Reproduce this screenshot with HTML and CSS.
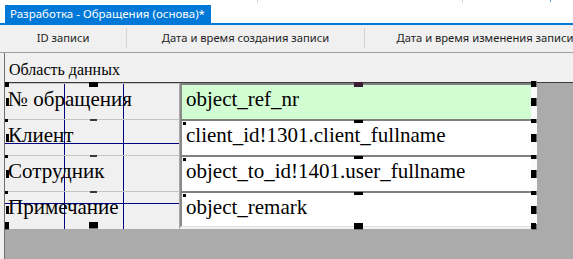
FILE: index.html
```html
<!DOCTYPE html>
<html lang="ru">
<head>
    <meta charset="UTF-8">
    <title>Разработка - Обращения (основа)</title>
    <link rel="stylesheet" href="styles.css">
</head>
<body>
    <div class="tabbar">
        <div class="tab">Разработка - Обращения (основа)*</div>
    </div>

    <div class="colheads">
        <div class="colhead c1">ID записи</div>
        <div class="colhead c2">Дата и время создания записи</div>
        <div class="colhead c3">Дата и время изменения записи</div>
    </div>

    <div class="main">
        <div class="ruler"></div>
        <div class="surface">
            <div class="section-head">Область данных</div>

            <div class="detail">
                <div class="form">
                    <div class="row first">
                        <div class="label">№ обращения</div>
                        <div class="field green">object_ref_nr</div>
                        <div class="edge"></div>
                        <span class="h h-lt big"></span>
                        <span class="h h-tm big"></span>
                        <span class="h h-lm"></span>
                        <span class="h f-tm big dark"></span>
                        <span class="h f-rt big"></span>
                        <span class="h f-rm"></span>
                    </div>
                    <div class="row">
                        <div class="label">Клиент</div>
                        <div class="field">client_id!1301.client_fullname</div>
                        <div class="edge"></div>
                        <span class="h h-lt"></span>
                        <span class="h h-tm"></span>
                        <span class="h h-lm"></span>
                        <span class="h f-lt"></span>
                        <span class="h f-tm"></span>
                        <span class="h f-rt"></span>
                        <span class="h f-rm"></span>
                    </div>
                    <div class="row">
                        <div class="label">Сотрудник</div>
                        <div class="field">object_to_id!1401.user_fullname</div>
                        <div class="edge"></div>
                        <span class="h h-lt"></span>
                        <span class="h h-tm"></span>
                        <span class="h h-lm"></span>
                        <span class="h f-lt"></span>
                        <span class="h f-tm"></span>
                        <span class="h f-rt"></span>
                        <span class="h f-rm"></span>
                    </div>
                    <div class="row last">
                        <div class="label">Примечание</div>
                        <div class="field">object_remark</div>
                        <div class="edge"></div>
                        <span class="h h-lt"></span>
                        <span class="h h-tm"></span>
                        <span class="h h-lm"></span>
                        <span class="h h-lb"></span>
                        <span class="h h-bm"></span>
                        <span class="h f-lt"></span>
                        <span class="h f-tm"></span>
                        <span class="h f-rt"></span>
                        <span class="h f-rm"></span>
                        <span class="h f-bm"></span>
                        <span class="h f-rb"></span>
                    </div>
                </div>
                <div class="rest"></div>
            </div>

            <div class="bottom"></div>
        </div>
    </div>
</body>
</html>
```

FILE: styles.css
```css
body {
    margin: 0;
    width: 573px;
    height: 259px;
    overflow: hidden;
    background: #f0f0f0;
    font-family: "Noto Sans", "Liberation Sans", sans-serif;
}

/* tab strip */
.tabbar {
    height: 23px;
    display: flex;
    align-items: flex-end;
    padding-left: 5px;
    background-color: #fff;
    background-image:
        linear-gradient(#d6d6d6, #d6d6d6),
        linear-gradient(#d6d6d6, #d6d6d6),
        linear-gradient(#5b9bd5, #5b9bd5);
    background-size: 1px 3px, 1px 3px, 1px 2px;
    background-position: 257px 0, 462px 0, 550px 0;
    background-repeat: no-repeat;
    border-bottom: 2px solid #0078d7;
}
.tab {
    height: 18px;
    line-height: 18px;
    padding: 0 6px 0 5px;
    background: #0078d7;
    color: #fff;
    font-size: 11.5px;
    white-space: nowrap;
}

/* column headers */
.colheads {
    display: flex;
    height: 27px;
    border-bottom: 1px solid #a0a0a0;
    white-space: nowrap;
    overflow: hidden;
}
.colhead {
    flex: none;
    height: 20px;
    margin-top: 3px;
    line-height: 20px;
    text-align: center;
    font-size: 11.2px;
    color: #1e1e1e;
    border-right: 1px solid #d4d4d4;
}
.c1 { width: 126px; }
.c2 { width: 237px; }
.c3 { width: 240px; border-right: none; }

/* design surface */
.main {
    display: flex;
    height: 206px;
}
.ruler {
    width: 4px;
    border-right: 1px solid #6e6e6e;
}
.surface {
    flex: 1;
    display: flex;
    flex-direction: column;
}
.section-head {
    height: 24px;
    padding: 5px 0 0 4px;
    font-family: "Liberation Serif", serif;
    font-size: 16px;
    line-height: 24px;
    color: #000;
}

.detail {
    display: flex;
    height: 146px;
    border-top: 1px solid #3c3c3c;
}
.form {
    width: 532px;
    display: flex;
    flex-direction: column;
    background-color: #f0f0f0;
    background-image:
        linear-gradient(#000080, #000080),
        linear-gradient(#000080, #000080),
        linear-gradient(#000080, #000080),
        linear-gradient(#000080, #000080);
    background-size: 1px 100%, 1px 100%, 100% 1px, 100% 1px;
    background-position: 59px 0, 118px 0, 0 60px, 0 120px;
    background-repeat: no-repeat;
}
.rest {
    flex: 1;
    background: #ababab;
}
.bottom {
    flex: 1;
    background: #ababab;
}

.row {
    position: relative;
    display: flex;
    height: 36px;
}
.row.last { height: 38px; }

.label {
    width: 171px;
    padding-left: 3px;
    border-top: 1px solid #c4c4c4;
    border-right: 1px solid #a8a8a8;
    font-family: "Liberation Serif", serif;
    font-size: 21px;
    line-height: 24px;
    padding-top: 3px;
    color: #000;
    white-space: nowrap;
}
.field {
    width: 345px;
    padding: 2px 0 0 4px;
    border-top: 2px solid #808080;
    border-left: 2px solid #8a8a8a;
    background: #fff;
    font-family: "Liberation Serif", serif;
    font-size: 21px;
    line-height: 24px;
    color: #000;
    white-space: nowrap;
    overflow: hidden;
}
.field.green { background: #d2fcd2; }
.row.last .field { border-bottom: 1px solid #e2e2e2; margin-bottom: 2px; }
.edge {
    flex: 1;
    background: #fafafa;
}

/* selection handles */
.h {
    position: absolute;
    background: #000;
}
.h-lt { left: 0; top: 0; width: 3px; height: 3px; }
.h-lt.big { top: -1px; width: 4px; height: 5px; }
.h-tm { left: 85px; top: 0; width: 7px; height: 2px; background: #3a3a3a; }
.h-tm.big { left: 84px; top: -1px; width: 9px; height: 5px; background: #000; }
.h-lm { left: 1px; top: 15px; width: 3px; height: 8px; }
.h-lb { left: 0; top: 31px; width: 4px; height: 7px; box-shadow: 0 1px #777; }
.h-bm { left: 84px; top: 31px; width: 9px; height: 6px; box-shadow: 0 1px #777; }
.f-lt { left: 178px; top: 3px; width: 3px; height: 3px; }
.f-tm { left: 349px; top: 1px; width: 9px; height: 3px; }
.f-tm.big { top: -1px; height: 5px; }
.f-tm.dark { background: #3b1a33; }
.f-rt { left: 526px; top: 0; width: 5px; height: 4px; box-shadow: 1px 0 #777; }
.f-rt.big { top: -2px; height: 6px; }
.f-rm { left: 526px; top: 15px; width: 5px; height: 8px; box-shadow: 1px 0 #666; }
.f-bm { left: 349px; top: 32px; width: 9px; height: 6px; box-shadow: 0 1px #777; }
.f-rb { left: 526px; top: 32px; width: 5px; height: 6px; box-shadow: 1px 1px #777; }
```
